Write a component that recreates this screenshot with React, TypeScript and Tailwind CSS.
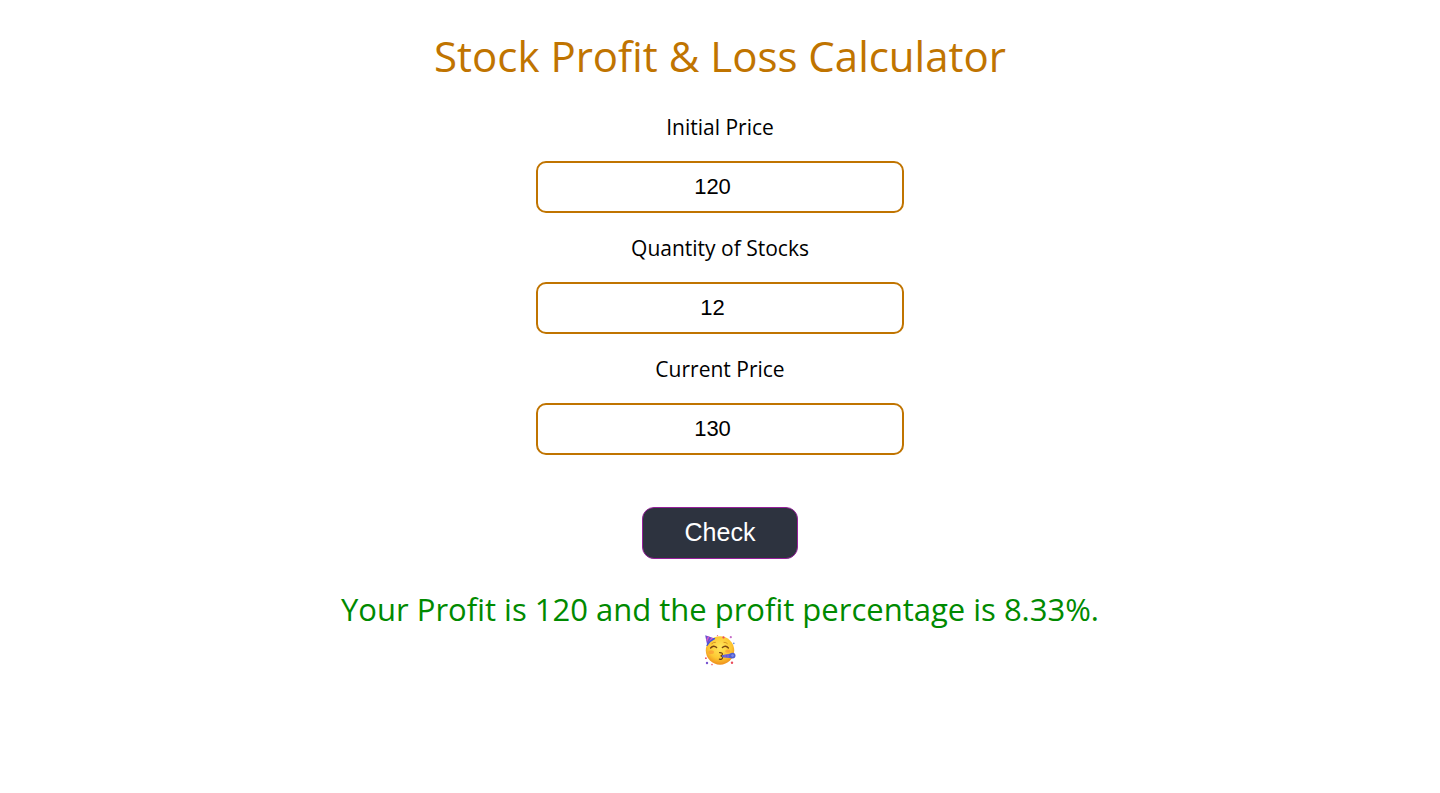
import { useState } from 'react';
import type { FormEvent } from 'react';

type Result = { text: string; tone: 'profit' | 'loss' | 'even' };

function calculate(initial: number, quantity: number, current: number): Result {
  const diff = current - initial;
  const total = Math.abs(diff) * quantity;
  const percentage = ((Math.abs(diff) / initial) * 100).toFixed(2);

  if (diff > 0) {
    return { text: `Your Profit is ${total} and the profit percentage is ${percentage}%.`, tone: 'profit' };
  }
  if (diff < 0) {
    return { text: `Your Loss is ${total} and the loss percentage is ${percentage}%.`, tone: 'loss' };
  }
  return { text: 'No pain no gain and no gain no pain.', tone: 'even' };
}

type PriceFieldProps = {
  id: string;
  label: string;
  value: string;
  onChange: (value: string) => void;
};

function PriceField({ id, label, value, onChange }: PriceFieldProps) {
  return (
    <>
      <label htmlFor={id} className="text-[21px] leading-[30px]">
        {label}
      </label>
      <input
        id={id}
        type="number"
        value={value}
        onChange={(e) => onChange(e.target.value)}
        className="mb-px h-[52px] w-full max-w-[368px] rounded-[10px] border-2 border-[#c07400] bg-white px-2 text-center font-['Liberation_Sans',Arial,sans-serif] text-[22px] text-black"
      />
    </>
  );
}

// Party face: hat, horn and confetti
function PartyFace() {
  return (
    <svg viewBox="0 0 32 32" className="mt-1 size-8" role="img" aria-label="Party face">
      <defs>
        <radialGradient id="face" cx="50%" cy="38%" r="62%">
          <stop offset="0%" stopColor="#ffe65c" />
          <stop offset="65%" stopColor="#fdc832" />
          <stop offset="100%" stopColor="#ee8f1c" />
        </radialGradient>
      </defs>
      <circle cx="16" cy="16.5" r="14.2" fill="url(#face)" />
      <path d="M1.2 1.2 10.6 4.6Q6 6.6 3.2 11.6Z" fill="#6a4fd0" />
      <path d="M4 2.3 5.4 2.8 3.1 7.8 2.3 5.4Z M7.4 3.6 9 4.2 4.4 9.2 3.2 10.4Z" fill="#d65bc8" />
      <path d="M3 11.4Q5.8 6.6 10.6 4.6" fill="none" stroke="#3f56d8" strokeWidth="1.2" strokeLinecap="round" />
      <path d="M6.6 14Q9.6 10.6 12.6 13.6M18.4 13.6Q21.4 10.6 24.4 14" fill="none" stroke="#7a4510" strokeWidth="1.4" strokeLinecap="round" />
      <path d="M7.8 9.6Q9.4 8 11.4 8.3M20 8.3Q22.2 8.1 23.4 9.6" fill="none" stroke="#d08a1e" strokeWidth="0.9" strokeLinecap="round" />
      <ellipse cx="7.2" cy="18.2" rx="2.8" ry="1.9" fill="#fb8a34" opacity="0.55" />
      <ellipse cx="23.8" cy="17.2" rx="2.6" ry="1.6" fill="#fb8a34" opacity="0.55" />
      <path d="M15.6 18.6Q19.2 18.6 18.2 20.8Q17.6 22 16.6 21.9Q19.2 22.1 18.4 24.2Q17.6 25.8 15.4 25.2" fill="none" stroke="#6b3a0c" strokeWidth="1.2" strokeLinecap="round" />
      <path d="M18 21.2 28 19.2V24.2L18 23.2Z" fill="#5363d6" />
      <path d="M21 20.6V23.5M24 20V23.8" stroke="#a05bd2" strokeWidth="1" />
      <circle cx="28.6" cy="21.6" r="2.9" fill="#5260cf" />
      <circle cx="28.6" cy="21.6" r="1.3" fill="#7e88ec" />
      <circle cx="19.5" cy="3.4" r="1.1" fill="#e94c5c" />
      <circle cx="13.5" cy="1.6" r="0.7" fill="#f36c8c" />
      <circle cx="26.8" cy="3.2" r="1.1" fill="#c56bc8" />
      <circle cx="29.8" cy="9.4" r="0.8" fill="#5a8be8" />
      <circle cx="1.9" cy="24.2" r="0.9" fill="#e94c5c" />
      <circle cx="3" cy="29" r="1.2" fill="#7753cf" />
      <circle cx="8" cy="30.6" r="0.8" fill="#ef5d7b" />
      <circle cx="28" cy="28.8" r="1.2" fill="#e94c5c" />
    </svg>
  );
}

export default function App() {
  const [initial, setInitial] = useState('120');
  const [quantity, setQuantity] = useState('12');
  const [current, setCurrent] = useState('130');
  const [result, setResult] = useState<Result | null>(calculate(120, 12, 130));

  const handleSubmit = (e: FormEvent) => {
    e.preventDefault();
    if (!initial || !quantity || !current) {
      setResult(null);
      return;
    }
    setResult(calculate(Number(initial), Number(quantity), Number(current)));
  };

  return (
    <main className="flex flex-col items-center px-4 py-7 text-center font-['Open_Sans','Noto_Sans',sans-serif] text-black">
      <h1 className="text-[42px] leading-[56px] text-[#c07400]">Stock Profit &amp; Loss Calculator</h1>

      <form onSubmit={handleSubmit} className="mt-7 flex w-full flex-col items-center gap-[19px]">
        <PriceField id="initial-price" label="Initial Price" value={initial} onChange={setInitial} />
        <PriceField id="quantity" label="Quantity of Stocks" value={quantity} onChange={setQuantity} />
        <PriceField id="current-price" label="Current Price" value={current} onChange={setCurrent} />
        <button
          type="submit"
          className="mt-8 h-[52px] w-[156px] cursor-pointer rounded-xl border border-[#96209a] bg-[#2d333f] font-['Liberation_Sans',Arial,sans-serif] text-[25px] text-white"
        >
          Check
        </button>
      </form>

      {result && (
        <output
          className={`mt-[30px] flex flex-col items-center text-[31px] leading-[41px]
            ${result.tone === 'loss' ? 'text-[red]' : 'text-[#008a00]'}`}
        >
          {result.text}
          {result.tone === 'profit' && <PartyFace />}
        </output>
      )}
    </main>
  );
}
